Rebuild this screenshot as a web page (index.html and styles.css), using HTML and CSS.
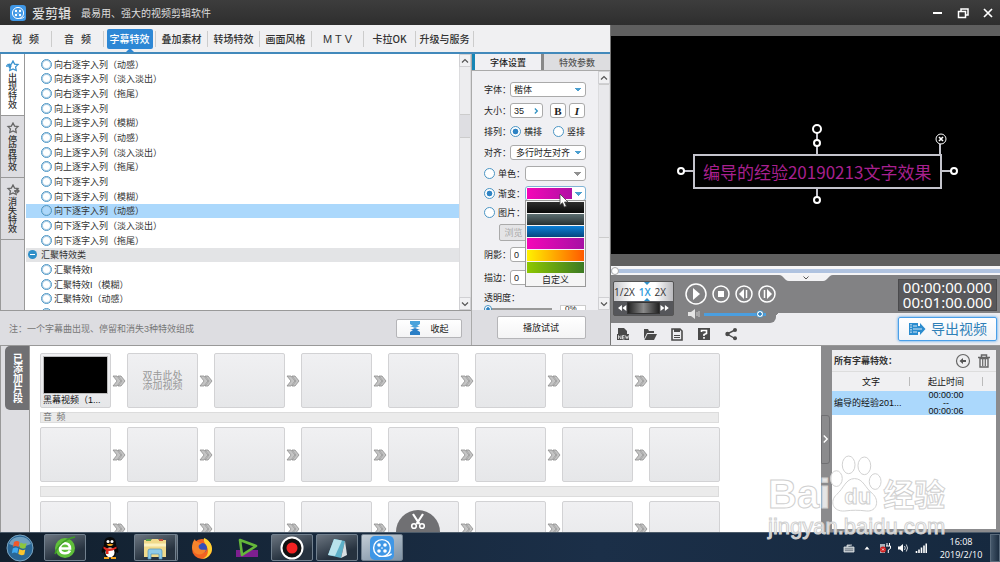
FILE: index.html
```html
<!DOCTYPE html>
<html lang="zh-CN">
  <head>
    <meta charset="UTF-8" />
    <meta name="viewport" content="width=device-width, initial-scale=1.0" />
    <title>爱剪辑</title>
    <link rel="stylesheet" href="styles.css">
  </head>
  <body>
    <!-- shared icons -->
    <svg class="defs" width="0" height="0">
      <symbol id="next" viewBox="0 0 14 12">
        <path d="M1 1h4l4 5-4 5H1l4-5zM6 1h3l4 5-4 5H6l4-5z" fill="#c4c4c4" stroke="#8e8e8e" stroke-width=".8" />
      </symbol>
      <symbol id="star" viewBox="0 0 14 12">
        <path d="M7 1l1.6 3.1 3.4.4-2.4 2.4.6 3.6L7 9 3.8 10.500l.6-3.600L2 4.500l3.400-.400z" fill="none" stroke="currentColor" stroke-width="1.300" />
      </symbol>
      <symbol id="up" viewBox="0 0 8 8"><path d="M1 5.500l3-3 3 3" fill="none" stroke="#555" stroke-width="1.200" /></symbol>
      <symbol id="down" viewBox="0 0 8 8"><path d="M1 2.500l3 3 3-3" fill="none" stroke="#555" stroke-width="1.200" /></symbol>
      <symbol id="reel" viewBox="0 0 20 20">
        <rect width="20" height="20" rx="4" fill="#3f97e6" />
        <circle cx="10" cy="10" r="7" fill="none" stroke="#fff" stroke-width="1.200" />
        <circle cx="7.500" cy="7.500" r="1.500" fill="#fff" /><circle cx="12.500" cy="7.500" r="1.500" fill="#fff" />
        <circle cx="7.500" cy="12.500" r="1.500" fill="#fff" /><circle cx="12.500" cy="12.500" r="1.500" fill="#fff" />
        <circle cx="10" cy="10" r=".7" fill="#fff" />
        <path d="M12 16.800q4 0 6-2" fill="none" stroke="#fff" stroke-width="1.200" />
      </symbol>
    </svg>

    <header class="titlebar">
      <svg class="logo"><use href="#reel" /></svg>
      <h1>爱剪辑</h1>
      <p>最易用、强大的视频剪辑软件</p>
      <div class="winbtns">
        <button aria-label="最小化"><svg viewBox="0 0 12 12"><path d="M1 6h9" stroke="#fff" stroke-width="2" /></svg></button>
        <button aria-label="还原"><svg viewBox="0 0 12 12"><path d="M4 4V2h7v6H9M1.500 4.500h7v6h-7z" fill="none" stroke="#fff" stroke-width="1.500" /></svg></button>
        <button aria-label="关闭"><svg viewBox="0 0 12 12"><path d="M2 2l8 8M10 2l-8 8" stroke="#fff" stroke-width="1.700" /></svg></button>
      </div>
    </header>

    <main class="upper">
      <section class="editor">
        <nav class="tabs">
          <a href="#">视&ensp; 频</a>
          <a href="#">音&ensp; 频</a>
          <a href="#" class="active"><span>字幕特效</span></a>
          <a href="#">叠加素材</a>
          <a href="#">转场特效</a>
          <a href="#">画面风格</a>
          <a href="#" class="latin">M T V</a>
          <a href="#">卡拉OK</a>
          <a href="#" class="wide">升级与服务</a>
        </nav>
        <div class="panes">
          <div class="effects">
            <div class="effects-main">
              <div class="side-tabs">
                <button class="on">
                  <svg><use href="#star" /><path d="M0 6h5M3 4l2 2-2 2" fill="none" stroke="currentColor" stroke-width="1.300" /></svg>
                  <span>出现特效</span>
                </button>
                <button><svg><use href="#star" /></svg><span>停留特效</span></button>
                <button>
                  <svg><use href="#star" /><path d="M8 7h5M11 5l2 2-2 2" fill="none" stroke="currentColor" stroke-width="1.300" /></svg>
                  <span>消失特效</span>
                </button>
              </div>
              <div class="list-box">
                <ul class="list">
                  <li><label><input type="radio" name="fx" />向右逐字入列（动感）</label></li>
                  <li><label><input type="radio" name="fx" />向右逐字入列（淡入淡出）</label></li>
                  <li><label><input type="radio" name="fx" />向右逐字入列（拖尾）</label></li>
                  <li><label><input type="radio" name="fx" />向上逐字入列</label></li>
                  <li><label><input type="radio" name="fx" />向上逐字入列（模糊）</label></li>
                  <li><label><input type="radio" name="fx" />向上逐字入列（动感）</label></li>
                  <li><label><input type="radio" name="fx" />向上逐字入列（淡入淡出）</label></li>
                  <li><label><input type="radio" name="fx" />向上逐字入列（拖尾）</label></li>
                  <li><label><input type="radio" name="fx" />向下逐字入列</label></li>
                  <li><label><input type="radio" name="fx" />向下逐字入列（模糊）</label></li>
                  <li class="selected"><label><input type="radio" name="fx" checked />向下逐字入列（动感）</label></li>
                  <li><label><input type="radio" name="fx" />向下逐字入列（淡入淡出）</label></li>
                  <li><label><input type="radio" name="fx" />向下逐字入列（拖尾）</label></li>
                  <li class="group"><i class="minus"></i>汇聚特效类</li>
                  <li><label><input type="radio" name="fx" />汇聚特效I</label></li>
                  <li><label><input type="radio" name="fx" />汇聚特效I（模糊）</label></li>
                  <li><label><input type="radio" name="fx" />汇聚特效I（动感）</label></li>
                  <li><input type="radio" name="fx" aria-label="更多" /></li>
                </ul>
              </div>
              <div class="scroll">
                <button aria-label="上"><svg><use href="#up" /></svg></button>
                <div class="track"><i class="thumb"></i></div>
                <button aria-label="下"><svg><use href="#down" /></svg></button>
              </div>
            </div>
            <div class="effects-foot">
              <p>注：一个字幕曲出现、停留和消失3种特效组成</p>
              <button class="btn collapse">
                <svg viewBox="0 0 12 14"><path d="M1 0h10v3L8 5h3L6 7 1 5h3L1 3z" fill="#4aa3dc" /><path d="M1 14h10v-3L8 9h3L6 7 1 9h3l-3 2z" fill="#2b7fc6" /></svg>
                收起
              </button>
            </div>
          </div>

          <div class="font-panel">
            <div class="ptabs">
              <button class="on">字体设置</button>
              <button>特效参数</button>
            </div>
            <div class="pbody">
              <form class="fields">
                <div class="row">
                  <label for="font">字体：</label>
                  <select id="font" class="field full"><option>楷体</option></select>
                </div>
                <div class="row">
                  <label for="size">大小：</label>
                  <span class="field spin"><input id="size" type="text" value="35" /><svg viewBox="0 0 6 8"><path d="M1 1l3 3-3 3" fill="none" stroke="#2a8fc0" stroke-width="1.500" /></svg></span>
                  <button type="button" class="style-btn bold">B</button>
                  <button type="button" class="style-btn italic">I</button>
                </div>
                <div class="row">
                  <span class="lbl">排列：</span>
                  <label class="opt"><input type="radio" name="dir" checked />横排</label>
                  <label class="opt"><input type="radio" name="dir" />竖排</label>
                </div>
                <div class="row">
                  <label for="align">对齐：</label>
                  <select id="align" class="field full"><option>多行时左对齐</option></select>
                </div>
                <div class="row">
                  <label class="fill"><input type="radio" name="fill" />单色：</label>
                  <select class="field part" aria-label="单色"><option></option></select>
                </div>
                <div class="row tight">
                  <label class="fill"><input type="radio" name="fill" checked />渐变：</label>
                  <div class="picker">
                    <select class="field gradient" aria-label="渐变"><option></option></select>
                    <div class="menu">
                      <button type="button" class="g-black" aria-label="黑"></button>
                      <button type="button" class="g-slate" aria-label="灰"></button>
                      <button type="button" class="g-blue" aria-label="蓝"></button>
                      <button type="button" class="g-pink" aria-label="粉"></button>
                      <button type="button" class="g-orange" aria-label="橙"></button>
                      <button type="button" class="g-green" aria-label="绿"></button>
                      <button type="button" class="custom">自定义</button>
                    </div>
                    <svg class="cursor" viewBox="0 0 10 15"><path d="M1 1v11l2.500-2.300L5.300 14l2-.8L5.500 9H9z" fill="#fff" stroke="#444" stroke-width=".8" /></svg>
                  </div>
                </div>
                <div class="row tight">
                  <label class="fill"><input type="radio" name="fill" />图片：</label>
                </div>
                <div class="row"><button type="button" class="browse" disabled>浏览</button></div>
                <div class="row loose">
                  <label for="shadow">阴影：</label>
                  <input id="shadow" class="field" type="text" value="0" />
                </div>
                <div class="row loose">
                  <label for="stroke">描边：</label>
                  <input id="stroke" class="field" type="text" value="0" />
                </div>
                <div class="row short"><label for="alpha">透明度：</label></div>
                <div class="row alpha">
                  <input id="alpha" type="range" value="0" />
                  <output>0%</output>
                </div>
              </form>
              <div class="scroll">
                <button aria-label="上"><svg><use href="#up" /></svg></button>
                <div class="track"><i class="thumb long"></i></div>
                <button aria-label="下"><svg><use href="#down" /></svg></button>
              </div>
            </div>
            <div class="pfoot"><button class="btn try">播放试试</button></div>
          </div>
        </div>
      </section>

      <section class="player">
        <div class="screen">
          <div class="caption">
            <span>编导的经验20190213文字效果</span>
            <i class="stem n"></i><i class="stem s"></i><i class="stem w"></i><i class="stem e"></i><i class="stem c"></i>
            <i class="knob rot"></i><i class="knob n"></i><i class="knob s"></i><i class="knob w"></i><i class="knob e"></i>
            <button class="del" aria-label="删除"><svg viewBox="0 0 12 12"><circle cx="6" cy="6" r="5" fill="#000" stroke="#fff" /><path d="M4 4l4 4M8 4L4 8" stroke="#fff" stroke-width="1.600" /></svg></button>
          </div>
        </div>
        <input class="seek" type="range" value="0" aria-label="进度" />
        <div class="deck">
          <div class="deck-left">
            <div class="speed">
              <div class="rates"><span>1/2X</span><b>1X</b><span>2X</span></div>
              <div class="jog">
                <svg viewBox="0 0 9 8"><path d="M4 1v6L0 4zM8.500 1v6l-4-3z" fill="#fff" /></svg>
                <i></i>
                <svg viewBox="0 0 9 8"><path d="M.5 1v6l4-3zM5 1v6l4-3z" fill="#fff" /></svg>
              </div>
            </div>
            <div class="transport">
              <div class="keys">
                <button class="play" aria-label="播放"><svg viewBox="0 0 22 22"><circle cx="11" cy="11" r="10" /><path d="M8 5v12l7-6z" fill="#fff" /></svg></button>
                <button aria-label="停止"><svg viewBox="0 0 18 18"><circle cx="9" cy="9" r="8" /><path d="M6 6h6v6H6z" fill="#fff" /></svg></button>
                <button aria-label="上一帧"><svg viewBox="0 0 18 18"><circle cx="9" cy="9" r="8" /><path d="M9 4v10L4 9z" fill="#fff" /><path d="M11.500 5v8" /></svg></button>
                <button aria-label="下一帧"><svg viewBox="0 0 18 18"><circle cx="9" cy="9" r="8" /><path d="M9 4v10l5-5z" fill="#fff" /><path d="M6.500 5v8" /></svg></button>
              </div>
              <div class="volume">
                <svg viewBox="0 0 14 10"><path d="M1 3h3l4-3v10L4 7H1z" fill="#e4e4e4" /><path d="M10 3v4M12 2v6" stroke="#ccc" fill="none" /></svg>
                <input type="range" value="96" aria-label="音量" />
              </div>
            </div>
          </div>
          <div class="deck-right">
            <div class="clock"><span>00:00:00.000</span><span>00:01:00.000</span></div>
          </div>
          <button class="drawer" aria-label="展开"><svg viewBox="0 0 54 6"><path d="M0 0h54c-5 0-5 6-10 6H10C5 6 5 0 0 0z" fill="#f2f2f4" /><path d="M24.500 1.500l2.500 2.500 2.500-2.500" fill="none" stroke="#555" /></svg></button>
        </div>
        <div class="tools">
          <div class="file-btns">
            <button aria-label="新建"><svg viewBox="0 0 14 14"><path d="M2 1h6l3 3v3H2z" fill="#4a4a4a" /><path d="M1 7h12v6H1z" fill="#4a4a4a" /><path d="M2.500 12V8.500L5 12V8.500M8.500 8.500h-2V12h2M6.500 10.200h2M9.500 8.500l.8 3 .7-2 .7 2 .8-3" fill="none" stroke="#eee" stroke-width=".8" /></svg></button>
            <button aria-label="打开"><svg viewBox="0 0 14 14"><path d="M1 12V2h4l1 2h5v2H4z" fill="#4a4a4a" /><path d="M4.500 7H14l-3 6H1.500z" fill="#4a4a4a" /></svg></button>
            <button aria-label="保存"><svg viewBox="0 0 14 14"><path d="M2 2h8l2 2v9H2z" fill="none" stroke="#4a4a4a" stroke-width="1.600" /><path d="M4 2h6v3H4z" fill="#4a4a4a" /><path d="M4 8.500h6M4 10.500h6" stroke="#4a4a4a" /></svg></button>
            <button aria-label="帮助"><svg viewBox="0 0 14 14"><path d="M1 1h12v12H1z" fill="#4a4a4a" /><path d="M4.500 5V3.500h5v3L7 7.500v1.500M7 10v1.800" fill="none" stroke="#fff" stroke-width="1.600" /></svg></button>
            <button aria-label="分享"><svg viewBox="0 0 14 14"><path d="M11 3L3 7l8 4.500" fill="none" stroke="#4a4a4a" stroke-width="1.400" /><circle cx="11" cy="3" r="2" fill="#4a4a4a" /><circle cx="3.500" cy="7" r="2.200" fill="#4a4a4a" /><circle cx="11" cy="11.300" r="2" fill="#4a4a4a" /></svg></button>
          </div>
          <button class="export">
            <svg viewBox="0 0 18 14"><path d="M1 1h9v3h2V1l5.500 6L12 13v-3h-2v3H1z" fill="#2b8ccf" /><path d="M3 2v10" stroke="#fff" stroke-dasharray="1.500 1" /><path d="M5 4h4M5 10h4M5 7h9" stroke="#fff" stroke-width=".8" /></svg>
            导出视频
          </button>
        </div>
      </section>
    </main>

    <section class="lower">
      <div class="rail"><button>已添加片段</button></div>
      <div class="timeline">
        <div class="strip">
          <div class="cell clip"><i></i><span>黑幕视频（1...</span></div><svg><use href="#next" /></svg>
          <div class="cell hint">双击此处<br />添加视频</div><svg><use href="#next" /></svg>
          <div class="cell"></div><svg><use href="#next" /></svg>
          <div class="cell"></div><svg><use href="#next" /></svg>
          <div class="cell"></div><svg><use href="#next" /></svg>
          <div class="cell"></div><svg><use href="#next" /></svg>
          <div class="cell"></div><svg><use href="#next" /></svg>
          <div class="cell"></div>
        </div>
        <div class="divider">音&ensp;频</div>
        <div class="strip">
          <div class="cell"></div><svg><use href="#next" /></svg>
          <div class="cell"></div><svg><use href="#next" /></svg>
          <div class="cell"></div><svg><use href="#next" /></svg>
          <div class="cell"></div><svg><use href="#next" /></svg>
          <div class="cell"></div><svg><use href="#next" /></svg>
          <div class="cell"></div><svg><use href="#next" /></svg>
          <div class="cell"></div><svg><use href="#next" /></svg>
          <div class="cell"></div>
        </div>
        <div class="divider"></div>
        <div class="strip">
          <div class="cell"></div><svg><use href="#next" /></svg>
          <div class="cell"></div><svg><use href="#next" /></svg>
          <div class="cell"></div><svg><use href="#next" /></svg>
          <div class="cell"></div><svg><use href="#next" /></svg>
          <div class="cell"></div><svg><use href="#next" /></svg>
          <div class="cell"></div><svg><use href="#next" /></svg>
          <div class="cell"></div><svg><use href="#next" /></svg>
          <div class="cell"></div>
        </div>
        <button class="cut" aria-label="剪切"><svg viewBox="0 0 16 17"><path d="M3 1l6.500 10M13 1L6.500 11" stroke="#fff" stroke-width="2.200" /><circle cx="4" cy="13" r="2.300" fill="none" stroke="#fff" stroke-width="1.600" /><circle cx="12" cy="13" r="2.300" fill="none" stroke="#fff" stroke-width="1.600" /></svg></button>
      </div>
      <div class="splitter"><button aria-label="收起侧栏"><svg viewBox="0 0 8 12"><path d="M2 2l4 4-4 4" fill="none" stroke="#fff" stroke-width="1.600" /></svg></button></div>
      <aside class="captions">
        <div class="cap-head">
          <h2>所有字幕特效：</h2>
          <button aria-label="返回"><svg viewBox="0 0 16 16"><circle cx="8" cy="8" r="6.500" fill="none" stroke="#666" stroke-width="1.200" /><path d="M4.500 8L8 5v2h3v2H8v2z" fill="#555" /></svg></button>
          <button aria-label="删除"><svg viewBox="0 0 16 16"><path d="M2 4.500h12M5.500 4V2h5v2" fill="none" stroke="#666" stroke-width="1.500" /><path d="M4 5.500h8V14H4z" fill="none" stroke="#666" stroke-width="1.400" /><path d="M6.700 6v7M9.300 6v7" stroke="#666" stroke-width="1.200" /></svg></button>
        </div>
        <table>
          <thead><tr><th>文字</th><th>起止时间</th></tr></thead>
          <tbody>
            <tr><td>编导的经验201...</td><td class="time">00:00:00<br />--<br />00:00:06</td></tr>
          </tbody>
        </table>
      </aside>
    </section>

    <footer class="taskbar">
      <button class="start" aria-label="开始"><svg viewBox="0 0 28 28"><circle cx="14" cy="14" r="13" fill="#2a6796" stroke="#7aa5c2" /><path d="M3 10a12 12 0 0 1 22 0q-11 5-22 0z" fill="#9fc4da" opacity=".6" /><path d="M8 8q3-2 5.500 0l-1 5q-3-2-5.500 0z" fill="#f0592b" /><path d="M14.500 8.500q3 2 6 .5l-1 5q-3 1.500-6-.5z" fill="#8cc63e" /><path d="M6.800 14.500q3-2 5.500 0l-1 5q-3-2-5.500 0z" fill="#3fa9f0" /><path d="M13.300 15q3 2 6 .5l-1 5q-3 1.500-6-.5z" fill="#fbc52d" /></svg></button>
      <div class="apps">
        <button class="open" aria-label="浏览器"><svg viewBox="0 0 24 24"><circle cx="12" cy="12" r="10" fill="#5fbf3a" /><path d="M7 12.500h10c0-7-10-7-10 0 0 6 8 6 10 2" fill="none" stroke="#fff" stroke-width="2.600" /><path d="M2 18C5 8 13 3 22 1" fill="none" stroke="#3d9b25" stroke-width="1.500" /></svg></button>
        <button aria-label="QQ"><svg viewBox="0 0 24 24"><path d="M12 1c-5 0-6 4-6 8-2 3-3 6-2 8l2-1c0 4 3 6 6 6s6-2 6-6l2 1c1-2 0-5-2-8 0-4-1-8-6-8z" fill="#080808" /><ellipse cx="12" cy="16.500" rx="4.500" ry="5" fill="#fff" /><circle cx="10" cy="5.500" r="1.500" fill="#fff" /><circle cx="14" cy="5.500" r="1.500" fill="#fff" /><path d="M8.500 8.500q3.500-1.500 7 0-3.500 3-7 0z" fill="#f5a31d" /><path d="M5.500 10.500q6.500 4 13 0v2q-5 3-8 2.500v3H8v-3.500l-2.500-2z" fill="#e02a22" /><path d="M6 22h5M13 22h5" stroke="#f5a31d" stroke-width="2" /></svg></button>
        <button class="open stack" aria-label="资源管理器"><svg viewBox="0 0 24 24"><path d="M1 4h7l1-1h6l1 1h7v17H1z" fill="#f0d98a" /><path d="M3 3h5v2H3z" fill="#5a9d4d" /><path d="M16 3h4v2h-4z" fill="#c7523d" /><path d="M1 9h22" stroke="#fbf1c0" stroke-width="3" /><path d="M5 23v-8q0-2 2-2h10q2 0 2 2v8h-3v-5H8v5z" fill="#8ecbe8" stroke="#4f93bd" stroke-width=".7" /></svg></button>
        <button aria-label="Firefox"><svg viewBox="0 0 24 24"><circle cx="12" cy="13" r="10" fill="#f26322" /><path d="M14 2c5 2 8 6 8 11s-5 10-10 10c6-2 7-8 5-12-1-3-4-5-3-9z" fill="#ffd233" /><circle cx="12" cy="12" r="5" fill="#344fb8" /><path d="M2 12c0-4 1-7 3-9 0 3 4 3 7 5-3 0-4 2-3 4 2 3 5 1 7 2-2 5-9 6-12 2z" fill="#f7842c" /></svg></button>
        <button aria-label="播放器"><svg viewBox="0 0 24 24"><path d="M1 14h22v7H1z" fill="#7e1f8f" /><path d="M5 4l16 6L7 19z" fill="#12202e" stroke="#64b83a" stroke-width="2.600" stroke-linejoin="round" /></svg></button>
        <button class="open" aria-label="录屏"><svg viewBox="0 0 24 24"><circle cx="12" cy="12" r="10.500" fill="#111" stroke="#fff" stroke-width="2" /><circle cx="12" cy="12" r="5.500" fill="#f42222" /></svg></button>
        <button class="open" aria-label="记事本"><svg viewBox="0 0 24 24"><path d="M9 3l11 2-4 17L3 19z" fill="#5db0c8" /><path d="M9 3l8 1.500L10 20 3 19z" fill="#b9e3ec" /><path d="M20 5l2 14-6 3z" fill="#d9dfe2" /></svg></button>
        <button class="open now" aria-label="爱剪辑"><svg viewBox="0 0 20 20"><use href="#reel" width="20" height="20" /></svg></button>
      </div>
      <div class="tray">
        <svg viewBox="0 0 12 12"><path d="M1 5h10v5H1zM4 5V3h5" fill="#aeb6bd" stroke="#dfe3e6" stroke-width=".8" /><path d="M2.500 6.800h7M2.500 8.500h7" stroke="#56616c" stroke-dasharray="1 1" /></svg>
        <svg viewBox="0 0 12 12"><path d="M6 4.500l2.500 3h-5z" fill="#fff" /></svg>
        <svg viewBox="0 0 12 12"><path d="M1 2h5v9H1z" fill="#a9b4bb" /><path d="M8 1v3M10.500 1v3M7 4h4.500v2.500L9.300 8v3" stroke="#fff" fill="none" /><circle cx="4" cy="7.500" r="3" fill="#d02020" /><path d="M3 6.500l2 2M5 6.500l-2 2" stroke="#fff" stroke-width=".8" /></svg>
        <svg viewBox="0 0 12 12"><path d="M1 4.500h2L6 2v8L3 7.500H1z" fill="#fff" /><path d="M7.500 4q1.500 2 0 4M9.300 2.500q2.500 3.500 0 7" stroke="#fff" fill="none" stroke-width=".8" /></svg>
        <svg viewBox="0 0 12 12"><path d="M1.500 11V9M4 11V7.500M6.500 11V5.500M9 11V3.500M11.300 11V1.500" stroke="#fff" stroke-width="1.600" /></svg>
        <time>16:08<br />2019/2/10</time>
      </div>
      <button class="desktop" aria-label="显示桌面"></button>
    </footer>

    <div class="watermark">
      <div class="brand">
        <span>Bai</span>
        <div class="paw">
          <svg viewBox="0 0 54 60"><g fill="#fff" fill-opacity=".8" stroke="#d0d0d0"><ellipse cx="19" cy="11" rx="6.500" ry="9" /><ellipse cx="35" cy="12" rx="6.500" ry="9" /><ellipse cx="6.500" cy="25" rx="6" ry="8" /><ellipse cx="46" cy="28" rx="6" ry="8" /><path d="M25 25c9 0 11 10 18 15 8 7 5 19-6 18-8-1-14-1-22 0-12 1-16-10-8-17 7-6 9-16 18-16z" /></g></svg>
          <span>du</span>
        </div>
        <span class="cn">经验</span>
      </div>
      <p>jingyan.baidu.com</p>
    </div>
  </body>
</html>
```
FILE: styles.css
```css
* {
  box-sizing: border-box;
}
body {
  margin: 0;
  height: 100vh;
  display: flex;
  flex-direction: column;
  overflow: hidden;
  position: relative;
  background: #dddde1;
  font-family: "Liberation Sans", "Noto Sans CJK SC", sans-serif;
  font-size: 9px;
  color: #333;
}
h1,
h2,
p,
ul {
  margin: 0;
  padding: 0;
}
button,
input,
select {
  font: inherit;
  color: inherit;
  margin: 0;
  padding: 0;
  border: 0;
  background: none;
}
a {
  color: inherit;
  text-decoration: none;
}
svg {
  display: block;
}
.defs {
  position: absolute;
}

/* title bar */
.titlebar {
  flex: none;
  height: 25px;
  display: flex;
  align-items: center;
  padding: 0 6px 0 10px;
  background: linear-gradient(#3d3d3d, #2e2e2e);
  color: #ddd;
}
.logo {
  width: 16px;
  height: 16px;
}
.titlebar h1 {
  margin-left: 6px;
  font-size: 13px;
  font-weight: 500;
}
.titlebar p {
  margin-left: 10px;
  font-size: 10px;
}
.winbtns {
  margin-left: auto;
  display: flex;
  gap: 13px;
}
.winbtns svg {
  width: 12px;
  height: 12px;
}

.upper {
  flex: 19 1 0;
  min-height: 0;
  display: grid;
  grid-template-columns: 61% 1fr;
  grid-template-rows: 100%;
  border-bottom: 1px solid #999;
}
.editor {
  display: flex;
  flex-direction: column;
  min-width: 0;
}
.tabs {
  flex: none;
  height: 29px;
  display: flex;
  align-items: center;
  background: #f0f0f2;
  border-bottom: 2px solid #4289bb;
  font-family: "Noto Sans CJK SC", sans-serif;
  font-size: 10px;
  font-weight: 500;
}
.tabs a {
  width: 52px;
  height: 16px;
  line-height: 16px;
  text-align: center;
  white-space: nowrap;
  border-right: 1px solid #ccc;
}
.tabs .wide {
  width: 58px;
}
.tabs .latin {
  font: 11px "Liberation Sans", sans-serif;
  line-height: 16px;
}
.tabs .active {
  position: relative;
  display: flex;
  align-items: center;
  justify-content: center;
  color: #fff;
}
.tabs .active span {
  flex: none;
  width: 46px;
  line-height: 20px;
  border-radius: 2px;
  background: #2d87d5;
}
.tabs .active::after {
  content: "";
  position: absolute;
  left: 22px;
  bottom: -5px;
  border: 4px solid transparent;
  border-top: 0;
  border-bottom-color: #2d87d5;
}
.panes {
  flex: 1;
  min-height: 0;
  display: flex;
}

/* effects list */
.effects {
  flex: 1;
  min-width: 0;
  display: flex;
  flex-direction: column;
}
.effects-main {
  flex: 1;
  min-height: 0;
  display: flex;
  background: #fff;
  border-bottom: 1px solid #999;
}
.side-tabs {
  flex: none;
  width: 25px;
  background: #dddde1;
  border-left: 1px solid #999;
  border-right: 1px solid #999;
}
.side-tabs button {
  width: 100%;
  height: 62px;
  display: flex;
  flex-direction: column;
  align-items: center;
  justify-content: center;
  gap: 1px;
  border-bottom: 1px solid #999;
  font-weight: 500;
}
.side-tabs .on {
  background: #fff;
}
.side-tabs svg {
  width: 14px;
  height: 12px;
  color: #666;
}
.side-tabs .on svg {
  color: #3b93cf;
}
.side-tabs span {
  writing-mode: vertical-rl;
}
.list-box {
  flex: 1;
  min-width: 0;
  overflow: hidden;
  padding-left: 1px;
}
.list {
  height: 104%;
  padding-top: 3px;
  display: flex;
  flex-direction: column;
  list-style: none;
}
.list li {
  flex: 1 1 0;
  min-height: 0;
  display: flex;
  align-items: center;
  padding-left: 15px;
  white-space: nowrap;
}
.list label {
  display: flex;
  align-items: center;
  gap: 2px;
}
.list .selected {
  background: #abd8fc;
}
.list .group {
  padding-left: 2px;
  gap: 4px;
  background: #e3e4e6;
}
.minus {
  width: 9px;
  height: 9px;
  border-radius: 50%;
  background: linear-gradient(#fff, #fff) center / 5px 1px no-repeat #2f8fc8;
}
input[type="radio"] {
  appearance: none;
  flex: none;
  width: 11px;
  height: 11px;
  border: 1px solid #4b95c4;
  border-radius: 50%;
  background: #fff;
}
.list input[type="radio"] {
  box-shadow: inset 0 0 0 1px #a9cce4;
  background: none;
}
.fields input[type="radio"]:checked {
  background: radial-gradient(#2e83c4 40%, #fff 50%);
}
.scroll {
  flex: none;
  width: 12px;
  display: flex;
  flex-direction: column;
  background: #ededef;
}
.scroll button {
  flex: none;
  height: 13px;
  display: flex;
  align-items: center;
  justify-content: center;
  border: 1px solid #d0d0d3;
  background: #f1f1f3;
}
.scroll svg {
  width: 8px;
  height: 8px;
}
.track {
  flex: 1;
  display: flex;
  flex-direction: column;
  border: 1px solid #dcdcde;
  border-width: 0 1px;
}
.thumb {
  margin-top: 47px;
  height: 24px;
  border: 1px solid #ccc;
  border-width: 1px 0;
  background: #dedee2;
}
.thumb.long {
  margin-top: 0;
  height: 72%;
  background: #e9e9ec;
}
.effects-foot {
  flex: none;
  height: 34px;
  display: flex;
  align-items: center;
  padding: 0 9px;
  color: #777;
}
.btn {
  border: 1px solid #b5b5b8;
  border-radius: 2px;
  background: linear-gradient(#fff, #f4f4f5);
  color: #222;
}
.collapse {
  margin-left: auto;
  width: 66px;
  height: 19px;
  display: flex;
  align-items: center;
  justify-content: center;
  gap: 9px;
}
.collapse svg {
  width: 12px;
  height: 14px;
}

/* font settings */
.font-panel {
  flex: none;
  width: 139px;
  display: flex;
  flex-direction: column;
  border-left: 1px solid #aaa;
  background: #f0f0f3;
}
.ptabs {
  flex: none;
  height: 17px;
  display: flex;
  border-bottom: 1px solid #aaa;
}
.ptabs button {
  flex: 1;
  border-left: 3px solid #888;
  background: #dddde0;
  color: #555;
  font-weight: 500;
}
.ptabs .on {
  border-color: #1585b5;
  background: #f0f0f3;
  color: #222;
}
.pbody {
  flex: 1;
  min-height: 0;
  display: flex;
}
.fields {
  flex: 1;
  min-width: 0;
  padding: 8px 0 0 12px;
  overflow: hidden;
  color: #222;
}
.row {
  height: 21px;
  display: flex;
  align-items: center;
  white-space: nowrap;
}
.row.tight {
  height: 19px;
}
.row.short {
  height: 16px;
}
.row.loose {
  height: 23px;
}
.row > label,
.lbl {
  flex: none;
  width: 26px;
}
.field {
  height: 15px;
  border: 1px solid #aaa;
  border-radius: 3px;
  background: #fff;
  padding: 0 3px;
}
select.field {
  appearance: none;
  background: linear-gradient(to bottom right, #4b9fd0 50%, transparent 50%) right 3px center / 4px 4px no-repeat,
    linear-gradient(to bottom left, #4b9fd0 50%, transparent 50%) right 7px center / 4px 4px no-repeat, #fff;
}
.full {
  width: 76px;
}
#align {
  padding-left: 5px;
}
.spin {
  width: 33px;
  display: flex;
  align-items: center;
  margin-right: 7px;
}
.spin input {
  width: 20px;
}
.spin svg {
  width: 6px;
  height: 8px;
}
.style-btn {
  width: 16px;
  height: 15px;
  margin-right: 3px;
  border: 1px solid #aaa;
  border-radius: 3px;
  background: #fff;
  font: bold 11px "Liberation Serif", serif;
  line-height: 12px;
}
.italic {
  font-style: italic;
}
.opt {
  display: flex;
  align-items: center;
  gap: 3px;
}
.row > .opt {
  width: 43px;
}
.row > .fill {
  width: 41px;
  display: flex;
  align-items: center;
  gap: 3px;
}
.part {
  width: 61px;
}
select.part {
  filter: grayscale(1);
}
.picker {
  position: relative;
}
select.gradient {
  display: block;
  width: 61px;
  border-color: #7fb3d5;
  background: linear-gradient(to bottom right, #4b9fd0 50%, transparent 50%) right 2px center / 4px 4px no-repeat,
    linear-gradient(to bottom left, #4b9fd0 50%, transparent 50%) right 6px center / 4px 4px no-repeat,
    linear-gradient(90deg, #f406b8, #b010a4) left 1px center / 45px 11px no-repeat, #fff;
}
.menu {
  position: absolute;
  left: 0;
  top: 14px;
  width: 61px;
  display: flex;
  flex-direction: column;
  gap: 1px;
  padding: 1px;
  border: 1px solid #999;
  background: #f5f5f5;
}
.menu button {
  height: 11px;
}
.g-black {
  background: linear-gradient(#2d2d2d, #0a0a0a);
}
.g-slate {
  background: linear-gradient(#5c6e70, #263033);
}
.g-blue {
  background: linear-gradient(#0c80d8, #05467e);
}
.g-pink {
  background: linear-gradient(90deg, #f406b8, #a610a4);
}
.g-orange {
  background: linear-gradient(90deg, #fff200, #ff5a00);
}
.g-green {
  background: linear-gradient(90deg, #8ec800, #3c7a24);
}
.menu .custom {
  line-height: 10px;
}
.cursor {
  position: absolute;
  left: 34px;
  top: 7px;
  width: 10px;
  height: 15px;
}
.browse {
  width: 29px;
  height: 17px;
  margin-left: 15px;
  border: 1px solid #aaa;
  border-radius: 2px;
  background: #e4e4e6;
  color: #aaa;
}
input.field {
  width: 44px;
}
.row.alpha {
  align-items: flex-start;
  justify-content: space-between;
  padding-right: 12px;
}
.alpha input {
  width: 68px;
}
.alpha output {
  width: 26px;
  padding-left: 4px;
  border: 1px solid #ccc;
  background: #fff;
  font-size: 8px;
  line-height: 6px;
}
.row > label[for="alpha"] {
  width: auto;
}
.pfoot {
  flex: none;
  height: 35px;
  display: flex;
  align-items: center;
  justify-content: center;
  background: #dddde1;
}
.try {
  width: 89px;
  height: 23px;
}

/* sliders */
input[type="range"] {
  appearance: none;
  height: 8px;
  background: linear-gradient(#999, #999) center / 100% 2px no-repeat;
}
input[type="range"]::-webkit-slider-thumb {
  appearance: none;
  width: 8px;
  height: 8px;
  border: 1px solid #4b95c4;
  border-radius: 50%;
  background: radial-gradient(#2e83c4 35%, #fff 45%);
}

/* player */
.player {
  min-width: 0;
  display: flex;
  flex-direction: column;
  border-left: 1px solid #777;
  background: #ededf0;
}
.screen {
  flex: 1;
  min-height: 0;
  position: relative;
  border: solid #5f5f5f;
  border-width: 11px 0 12px;
  background: #000;
}
.caption {
  position: absolute;
  left: 21%;
  top: 54%;
  width: 64%;
  height: 35px;
  display: flex;
  align-items: center;
  justify-content: center;
  border: 2px solid #c4c4cc;
  color: #a8208f;
  font-family: "Noto Sans CJK SC", sans-serif;
  font-size: 17px;
  font-weight: 400;
  white-space: nowrap;
}
.stem,
.knob,
.del {
  position: absolute;
}
.stem {
  background: #c4c4cc;
}
.stem.n,
.stem.s,
.stem.c {
  left: 50%;
  width: 2px;
  height: 26px;
  margin-left: -1px;
  bottom: 100%;
}
.stem.s {
  top: 100%;
  bottom: auto;
  height: 10px;
}
.stem.c {
  left: 100%;
  height: 12px;
}
.stem.w,
.stem.e {
  top: 50%;
  right: 100%;
  width: 12px;
  height: 2px;
  margin-top: -1px;
}
.stem.e {
  right: auto;
  left: 100%;
}
.knob {
  width: 8px;
  height: 8px;
  margin: -4px;
  border: 2px solid #fff;
  border-radius: 50%;
  background: #000;
}
.knob.n {
  left: 50%;
  top: -13px;
}
.knob.rot {
  left: 50%;
  top: -27px;
  width: 10px;
  height: 10px;
  margin: -5px;
}
.knob.s {
  left: 50%;
  bottom: -13px;
}
.knob.w {
  top: 50%;
  left: -14px;
}
.knob.e {
  top: 50%;
  right: -14px;
}
.del {
  right: -7px;
  top: -23px;
}
.del svg {
  width: 12px;
  height: 12px;
}
input.seek {
  flex: none;
  width: 100%;
  height: 9px;
  background: linear-gradient(#b0c3e0, #b0c3e0) center / 100% 4px no-repeat #f5f5f7;
}
input.seek::-webkit-slider-thumb {
  border-color: #aaa;
  background: #fff;
}
.deck {
  flex: none;
  position: relative;
  display: flex;
  align-items: flex-start;
}
.deck-left {
  flex: none;
  position: relative;
  width: 165px;
  height: 48px;
  display: flex;
  gap: 7px;
  padding: 6px 0 0 2px;
  border-radius: 0 0 6px 0;
  background: #828284;
}
/* fills the inner curve between the two deck heights */
.deck-left::after {
  content: "";
  position: absolute;
  left: 100%;
  top: 38px;
  width: 4px;
  height: 4px;
  background: radial-gradient(circle at 100% 100%, transparent 4px, #828284 4px);
}
.deck-right {
  flex: 1;
  height: 38px;
  display: flex;
  justify-content: flex-end;
  padding: 4px 3px 0 0;
  background: #828284;
}
.speed {
  width: 69px;
  height: 35px;
  display: flex;
  flex-direction: column;
  border: 1px solid #555;
  border-radius: 2px;
  background: #55565a;
  overflow: hidden;
}
.rates {
  position: relative;
  flex: none;
  height: 19px;
  display: flex;
  align-items: center;
  justify-content: space-between;
  padding-right: 7px;
  background: linear-gradient(90deg, #c9c9cc, #fff 30%, #fff 70%, #b9b9bd);
  font: 10px "Open Sans", sans-serif;
}
.rates b {
  font-weight: 600;
  color: #2f9bdc;
}
.rates::before,
.rates::after {
  content: "";
  position: absolute;
  left: 30px;
  top: 0;
  border: 3px solid transparent;
  border-top-color: #2f8fc8;
}
.rates::after {
  top: auto;
  bottom: 0;
  border-color: transparent transparent #2f8fc8;
}
.jog {
  flex: 1;
  display: flex;
  align-items: center;
  justify-content: space-between;
  padding: 0 4px;
}
.jog svg {
  width: 9px;
  height: 8px;
}
.jog i {
  width: 34px;
  height: 12px;
  border: 1px solid #333;
  background: linear-gradient(90deg, #222, #8a8a8a 50%, #222);
}
.transport {
  flex: none;
}
.keys {
  display: flex;
  align-items: center;
  gap: 5px;
  margin: 2px 0 0 4px;
}
.keys svg {
  width: 18px;
  height: 18px;
  fill: none;
  stroke: #fff;
  stroke-width: 1.5px;
}
.keys .play svg {
  width: 22px;
  height: 22px;
}
.keys path[fill] {
  stroke: none;
}
.volume {
  display: flex;
  align-items: center;
  gap: 3px;
  margin: 4px 0 0 6px;
}
.volume svg {
  width: 14px;
  height: 10px;
}
.volume input {
  width: 62px;
  background: linear-gradient(#4b9fe0, #4b9fe0) center / 100% 3px no-repeat;
}
.clock {
  width: 99px;
  height: 32px;
  display: flex;
  flex-direction: column;
  align-items: center;
  justify-content: center;
  border: 1px solid #4a4a4c;
  background: #58585b;
  color: #fff;
  font: 15px "Noto Sans", sans-serif;
  line-height: 15px;
}
.drawer {
  position: absolute;
  left: 50%;
  top: 0;
  width: 54px;
  margin-left: -27px;
}
.tools {
  flex: none;
  display: flex;
  align-items: flex-start;
  justify-content: space-between;
  height: 22px;
  padding: 0 3px 0 5px;
}
.file-btns {
  display: flex;
  gap: 13px;
  padding-top: 4px;
}
.file-btns svg {
  width: 14px;
  height: 14px;
}
.export {
  display: flex;
  align-items: center;
  justify-content: center;
  gap: 5px;
  width: 99px;
  height: 24px;
  margin-top: -6px;
  border: 1px solid #4a9fe8;
  border-radius: 2px;
  background: linear-gradient(#fff, #f1f4f8);
  box-shadow: 0 0 3px #3b9bf0;
  color: #2f80b8;
  font-size: 14px;
  line-height: 16px;
}
.export svg {
  width: 18px;
  height: 14px;
}

/* timeline */
.lower {
  flex: 11 1 0;
  min-height: 0;
  display: flex;
  overflow: hidden;
}
.rail {
  flex: none;
  width: 30px;
  padding-left: 4px;
  border-left: 1px solid #999;
  border-right: 1px solid #999;
}
.rail button {
  width: 24px;
  height: 64px;
  border-radius: 5px 0 0 5px;
  background: #707073;
  color: #fff;
  font-size: 10px;
  font-weight: bold;
  writing-mode: vertical-rl;
}
.timeline {
  flex: 1;
  min-width: 0;
  position: relative;
  padding: 7px 0 0 10px;
  background: #fff;
}
.strip {
  width: 87%;
  display: flex;
  align-items: center;
}
.strip svg {
  flex: none;
  width: 14px;
  height: 12px;
  margin: 0 1px;
}
.cell {
  flex: 1 1 0;
  min-width: 0;
  height: 55px;
  padding: 2px;
  border: 1px solid #d2d2d4;
  border-radius: 2px;
  background: linear-gradient(#f0f0f2, #e6e7e9);
}
.clip i {
  display: block;
  height: 38px;
  border: 1px solid #bbb;
  background: #000;
}
.clip span {
  display: block;
  line-height: 13px;
  color: #111;
  white-space: nowrap;
}
.hint {
  display: flex;
  align-items: center;
  justify-content: center;
  font-size: 10px;
  line-height: 10px;
  color: #999;
}
.divider {
  width: 87%;
  height: 11px;
  margin: 4px 0;
  padding-left: 2px;
  border: 1px solid #dcdcdc;
  background: #ebebeb;
  line-height: 9px;
  color: #777;
}
.cut {
  position: absolute;
  left: 49%;
  bottom: 0;
  width: 44px;
  height: 22px;
  margin-left: -22px;
  display: flex;
  align-items: center;
  justify-content: center;
  border-radius: 22px 22px 0 0;
  background: #707073;
}
.cut svg {
  width: 16px;
  height: 17px;
}
.splitter {
  flex: none;
  width: 11px;
  display: flex;
  align-items: center;
  background: #8b8b8d;
}
.splitter button {
  width: 9px;
  height: 49px;
  border: 1px solid #707073;
  border-radius: 0 3px 3px 0;
}
.splitter svg {
  width: 7px;
  height: 12px;
}
.captions {
  flex: none;
  width: 168px;
  border: solid #8b8b8d;
  border-width: 4px 4px 3px 0;
  background: #fff;
}
.cap-head {
  height: 21px;
  display: flex;
  align-items: center;
  gap: 5px;
  padding: 0 4px 0 2px;
  background: #eeeef0;
}
.cap-head h2 {
  flex: 1;
  font-size: 9px;
}
.cap-head svg {
  width: 16px;
  height: 16px;
}
.captions table {
  width: 100%;
  border-collapse: collapse;
  table-layout: fixed;
  color: #111;
}
.captions th {
  height: 19px;
  padding: 0;
  border-top: 1px solid #ddd;
  background: linear-gradient(#bbb, #bbb) right center / 1px 9px no-repeat #f0f0f2;
  font-weight: 400;
}
.captions th:first-child {
  width: 78px;
}
.captions th:last-child {
  padding-right: 14px;
  background-position: right 13px center;
}
.captions td {
  padding: 0 2px;
  background: #abd8fc;
  white-space: nowrap;
}
.captions .time {
  padding: 0 14px 0 0;
  text-align: center;
  line-height: 8px;
}

/* taskbar */
.taskbar {
  flex: none;
  height: 30px;
  display: flex;
  align-items: center;
  border-top: 1px solid #4c5b6a;
  background: linear-gradient(90deg, #12202e, #1b2f48 60%, #16293f);
}
.start {
  margin: 0 10px 0 6px;
}
.start svg {
  width: 28px;
  height: 28px;
}
.apps {
  display: flex;
  gap: 3px;
}
.apps button {
  width: 42px;
  height: 27px;
  display: flex;
  align-items: center;
  justify-content: center;
}
.apps svg {
  width: 24px;
  height: 24px;
}
.apps .open {
  border: 1px solid #71808e;
  border-radius: 2px;
  background: linear-gradient(160deg, #6b7580, #26323f 70%);
}
.apps .now {
  background: linear-gradient(160deg, #c3cdd6, #7e92a5);
}
.apps .stack {
  width: 44px;
  border-right: 3px double #71808e;
}
.tray {
  margin-left: auto;
  display: flex;
  align-items: center;
  gap: 6px;
  color: #fff;
}
.tray svg {
  width: 12px;
  height: 12px;
}
.tray time {
  width: 56px;
  text-align: center;
  font: 9px "Open Sans", sans-serif;
  line-height: 13px;
}
.desktop {
  width: 10px;
  height: 28px;
  margin-left: 1px;
  border: 1px solid #5a6b7c;
  background: linear-gradient(90deg, #44576a, #1c2d40);
}

/* watermark over the lower right corner */
.watermark {
  position: absolute;
  right: 54px;
  bottom: 24px;
  width: 178px;
  color: rgba(255, 255, 255, 0.8);
  -webkit-text-stroke: 1px #d0d0d0;
  pointer-events: none;
}
.brand {
  display: flex;
  align-items: flex-end;
  font: bold 40px "Liberation Sans", sans-serif;
  line-height: 38px;
}
.paw {
  position: relative;
}
.paw svg {
  width: 53px;
  height: 59px;
}
.paw span {
  position: absolute;
  left: 14px;
  bottom: 5px;
  font-size: 22px;
  line-height: 22px;
}
.brand .cn {
  font: bold 31px "Noto Sans CJK SC", sans-serif;
  line-height: 40px;
}
.watermark p {
  margin-top: 3px;
  font: 22px "Liberation Sans", sans-serif;
  line-height: 22px;
  white-space: nowrap;
}
```
